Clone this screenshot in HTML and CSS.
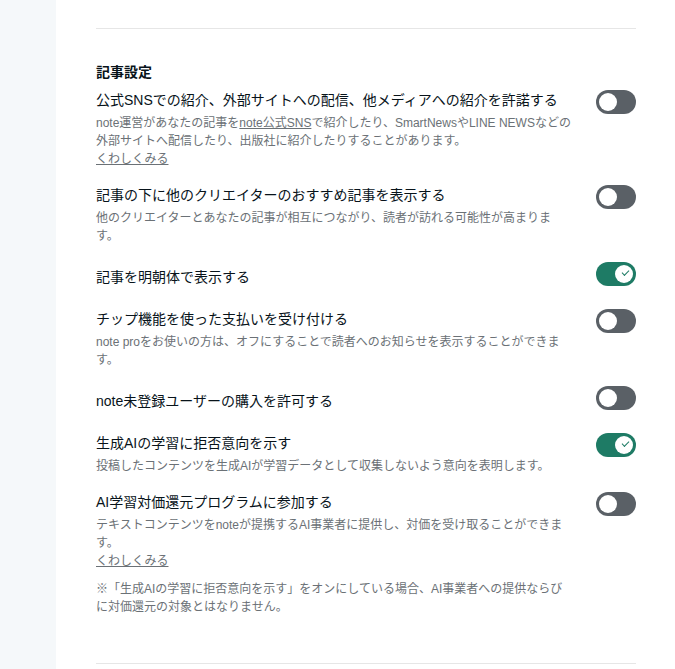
FILE: index.html
```html
<!DOCTYPE html>
<html lang="ja">
<head>
    <meta charset="UTF-8">
    <title>記事設定</title>
    <link rel="stylesheet" href="styles.css">
</head>
<body>
    <div class="page">
        <aside class="side"></aside>
        <main class="main">
            <section class="section">
                <h2 class="section_title">記事設定</h2>
                <ul class="setting_list">
                    <li class="setting">
                        <p class="setting_name">公式SNSでの紹介、外部サイトへの配信、他メディアへの紹介を許諾する</p>
                        <span class="toggle"></span>
                        <div class="setting_desc">
                            <p>note運営があなたの記事を<a href="#">note公式SNS</a>で紹介したり、SmartNewsやLINE NEWSなどの外部サイトへ配信したり、出版社に紹介したりすることがあります。</p>
                            <a href="#">くわしくみる</a>
                        </div>
                    </li>
                    <li class="setting">
                        <p class="setting_name">記事の下に他のクリエイターのおすすめ記事を表示する</p>
                        <span class="toggle"></span>
                        <div class="setting_desc">
                            <p>他のクリエイターとあなたの記事が相互につながり、読者が訪れる可能性が高まります。</p>
                        </div>
                    </li>
                    <li class="setting single">
                        <p class="setting_name">記事を明朝体で表示する</p>
                        <span class="toggle on"></span>
                    </li>
                    <li class="setting">
                        <p class="setting_name">チップ機能を使った支払いを受け付ける</p>
                        <span class="toggle"></span>
                        <div class="setting_desc">
                            <p>note proをお使いの方は、オフにすることで読者へのお知らせを表示することができます。</p>
                        </div>
                    </li>
                    <li class="setting single">
                        <p class="setting_name">note未登録ユーザーの購入を許可する</p>
                        <span class="toggle"></span>
                    </li>
                    <li class="setting">
                        <p class="setting_name">生成AIの学習に拒否意向を示す</p>
                        <span class="toggle on"></span>
                        <div class="setting_desc">
                            <p>投稿したコンテンツを生成AIが学習データとして収集しないよう意向を表明します。</p>
                        </div>
                    </li>
                    <li class="setting">
                        <p class="setting_name">AI学習対価還元プログラムに参加する</p>
                        <span class="toggle"></span>
                        <div class="setting_desc">
                            <p>テキストコンテンツをnoteが提携するAI事業者に提供し、対価を受け取ることができます。</p>
                            <a href="#">くわしくみる</a>
                            <p class="setting_note">※「生成AIの学習に拒否意向を示す」をオンにしている場合、AI事業者への提供ならびに対価還元の対象とはなりません。</p>
                        </div>
                    </li>
                </ul>
            </section>
            <section class="section"></section>
        </main>
    </div>
</body>
</html>
```

FILE: styles.css
```css
html,body{
    margin: 0;
    padding: 0;
    background-color: #fff;
}
body{
    font-family: "Liberation Sans", "Noto Sans CJK JP", sans-serif;
    color: #08131a;
}
p{
    margin: 0;
}
.page{
    display: flex;
    min-height: 669px;
}
.side{
    width: 56px;
    flex-shrink: 0;
    background-color: #f5f8fa;
}
.main{
    flex: 1;
    padding: 28px 39px 0 40px;
}
.section{
    border-top: 1px solid #e6e6e6;
    padding: 33px 0 47px;
}
.section_title{
    margin: 0 0 7px;
    font-size: 14px;
    font-weight: bold;
    line-height: 21px;
}
.setting_list{
    list-style: none;
    margin: 0;
    padding: 0;
}
/*タイトルとトグルを1行目に、説明文を2行目に置く*/
.setting{
    display: grid;
    grid-template-columns: 1fr 40px;
    column-gap: 24px;
    margin-bottom: 17px;
}
.setting:last-child{
    margin-bottom: 0;
}
.setting_name{
    font-size: 14px;
    line-height: 20px;
}
.setting.single{
    margin-bottom: 22px;
}
.setting.single .setting_name{
    padding-top: 5px;
}
.setting_desc{
    grid-column: 1;
    font-size: 12px;
    line-height: 18px;
    color: #6b7176;
}
.setting_desc a{
    color: #6b7176;
    text-decoration: underline;
}
.setting_note{
    max-width: 470px;
    margin-top: 10px;
}
/*トグルスイッチ*/
.toggle{
    position: relative;
    width: 40px;
    height: 24px;
    border-radius: 12px;
    background-color: #5a6066;
}
.toggle::after{
    content: "";
    position: absolute;
    top: 3px;
    left: 3px;
    width: 18px;
    height: 18px;
    border-radius: 50%;
    background-color: #fff;
}
.toggle.on{
    background-color: #1e7b65;
}
.toggle.on::after{
    left: 19px;
}
/*オンのときはつまみにチェックを入れる*/
.toggle.on::before{
    content: "";
    position: absolute;
    z-index: 1;
    top: 8px;
    left: 26px;
    width: 6px;
    height: 3px;
    border-left: 1.5px solid #1e7b65;
    border-bottom: 1.5px solid #1e7b65;
    transform: rotate(-45deg);
}
```
